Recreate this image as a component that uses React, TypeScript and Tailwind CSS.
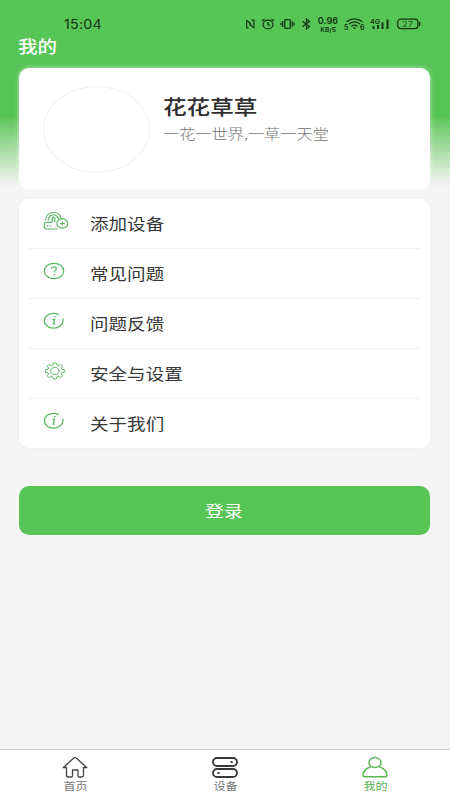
import type { ReactNode } from 'react';

const GREEN = '#57c456';

function RouterIcon() {
  return (
    <svg width="26" height="20" viewBox="0 0 26 20" fill="none" stroke="#5cb962" strokeWidth="1.2">
      <path d="M14.500 18H2.700a1.200 1.200 0 0 1-1.200-1.200v-4.300a1.200 1.200 0 0 1 1.200-1.200h6.500V7q1.300-1.600 2.600 0v4.300" />
      <path d="M2.700 9C3 4.500 6 1.500 10.300 1.500s7.200 2.600 7.700 6M5.300 9.300C5.600 6 7.400 4 10.300 4s4.600 1.600 5.100 4.300" />
      <path d="M4 14.800h1.300M7 14.800h1.300" strokeWidth="1.400" />
      <ellipse cx="19.300" cy="12.500" rx="5.500" ry="4.600" />
      <path d="M16.900 12.500h4.800M19.300 10.400v4.200" />
    </svg>
  );
}

function HelpIcon() {
  return (
    <svg width="22" height="18" viewBox="0 0 22 18" fill="none" stroke="#5cb962" strokeWidth="1.2">
      <ellipse cx="11" cy="9" rx="9.700" ry="7.700" />
      <path d="M8.500 7.100c0-1.400 1-2.300 2.500-2.300s2.400.9 2.400 2.100c0 1.700-2.300 1.700-2.300 3.700" strokeWidth="1.200" />
      <path d="M10.400 12.700h1.400" strokeWidth="1.300" />
    </svg>
  );
}

function InfoIcon() {
  return (
    <svg width="22" height="18" viewBox="0 0 22 18" fill="none" stroke="#5cb962" strokeWidth="1.3" strokeLinecap="round">
      <path d="M15.500 2.500C14 1.600 12.400 1.300 10.600 1.300 5.400 1.300 1.300 4.600 1.300 8.800s4.100 7.400 9.300 7.400 9.300-3.200 9.300-7.400V7" />
      <path d="M10 7.500h1.500l-1.100 4.700h1.300" strokeWidth="1.300" />
      <path d="M11.800 4.800h.2" strokeWidth="1.600" />
    </svg>
  );
}

function GearIcon() {
  return (
    <svg width="22" height="18" viewBox="0 0 22 18" fill="none" stroke="#5cb962" strokeWidth="1" strokeLinejoin="round">
      <path d="M10.400 1h3l.6 2.200 1.400.5 2.200-1.200 2.100 1.700-1.500 1.800.6 1.200 2.500.5v2.600l-2.500.5-.6 1.200 1.500 1.800-2.100 1.700-2.200-1.200-1.400.5-.6 2.200h-3l-.6-2.200-1.400-.5-2.200 1.200-2.100-1.700L5.600 12 5 10.800l-2.500-.5V7.700L5 7.200 5.600 6 4.100 4.200l2.100-1.700 2.200 1.200 1.400-.5z" />
      <ellipse cx="11.900" cy="9" rx="4.100" ry="3.500" />
    </svg>
  );
}

function StatusBar() {
  return (
    <div className="flex h-9 items-start pl-16 text-[#11380f]">
      <div className="mt-[15px] w-[181px] font-[Inter,sans-serif] text-[13px] leading-[18px]">
        <span className="inline-block origin-left scale-x-[1.1] tracking-[0.2px]">15:04</span>
      </div>
      <svg className="mt-[18px]" width="11" height="12" viewBox="0 0 11 12" fill="none" stroke="currentColor" strokeWidth="1.200">
        <path d="M3.800 10H1.700V2.500Q5.200 3.800 5.200 8M5.200 4.500Q5.700 8.500 8.900 9.700V2.200H6.800" />
      </svg>
      <svg className="ml-[5px] mt-[18px]" width="14" height="12" viewBox="0 0 14 12" fill="none" stroke="currentColor" strokeWidth="1.200">
        <ellipse cx="7" cy="6.500" rx="5" ry="4.400" />
        <path d="M7 4v3h2.300M1 3l2.500-2M13 3l-2.500-2" />
      </svg>
      <svg className="ml-[5px] mt-[18px]" width="15" height="12" viewBox="0 0 15 12" fill="none" stroke="currentColor" strokeWidth="1.200">
        <rect x="4.700" y="1.700" width="5.600" height="8.600" rx="1" />
        <path d="M2.700 3v6M12.300 3v6M1 4.500v3M14 4.500v3" />
      </svg>
      <svg className="ml-[6px] mt-[18px]" width="11" height="12" viewBox="0 0 11 12" fill="none" stroke="currentColor" strokeWidth="1.200">
        <path d="m1.500 3.200 7 5.300-3 2.500V1l3 2.500-7 5.300" />
      </svg>
      <div className="ml-[5px] mt-[15px] flex w-[22px] flex-col items-center font-[Inter,sans-serif] font-semibold">
        <span className="text-[9px] leading-[11px] tracking-[0.1px]">0.96</span>
        <span className="scale-x-[1.1] text-[6px] leading-[7px]">KB/S</span>
      </div>
      <svg className="ml-[5px] mt-[17px] font-[Inter,sans-serif] font-semibold" width="21" height="14" fill="none" stroke="currentColor" strokeWidth="1.300">
        <path d="M2.500 4.800c4.700-4 11.300-4 16 0M5 7c3.500-2.800 7.500-2.800 11 0M7.500 9.200c2-1.500 4-1.500 6 0" />
        <path d="M10.500 12.300 8.700 10.500h3.600z" fill="currentColor" stroke="none" />
        <g fill="currentColor" stroke="none" fontSize="7">
          <text x="0" y="13">5</text>
          <text x="16" y="13">6</text>
        </g>
      </svg>
      <svg className="ml-[5px] mt-[17px] font-[Inter,sans-serif] font-semibold" width="21" height="14" fill="currentColor">
        <text x="0" y="6.700" fontSize="6.500" textLength="10" lengthAdjust="spacingAndGlyphs">4G</text>
        <path d="M2.500 9h2v3h-2zM7 8h2v4H7zM11.500 5.500h2V12h-2zM16.500 2.500h2V12h-2z" />
      </svg>
      <svg className="ml-[5px] mt-[17px] font-[Inter,sans-serif]" width="25" height="14" fill="none" stroke="currentColor" strokeWidth="1.200">
        <rect x="1.700" y="2.200" width="20.300" height="9.400" rx="3" />
        <path d="M23.500 5v4" strokeWidth="1.500" />
        <text x="6" y="9.700" fontSize="7.500" fill="currentColor" stroke="none" opacity="0.750" textLength="11" lengthAdjust="spacingAndGlyphs">27</text>
      </svg>
    </div>
  );
}

const menu: { label: string; icon: ReactNode }[] = [
  { label: '添加设备', icon: <RouterIcon /> },
  { label: '常见问题', icon: <HelpIcon /> },
  { label: '问题反馈', icon: <InfoIcon /> },
  { label: '安全与设置', icon: <GearIcon /> },
  { label: '关于我们', icon: <InfoIcon /> },
];

function NavItem({ label, active, children }: { label: string; active?: boolean; children: ReactNode }) {
  return (
    <div className={`flex flex-1 flex-col items-center pt-[6px] ${active ? 'text-[#53b34f]' : 'text-[#777]'}`}>
      {children}
      <span className="inline-block scale-x-[1.150] text-[10.500px] leading-[14px]">{label}</span>
    </div>
  );
}

export default function App() {
  return (
    <div className="flex h-[800px] w-[450px] flex-col overflow-hidden bg-[#f5f5f5] font-['Noto_Sans_CJK_SC',sans-serif]">
      <header className="h-[187px] shrink-0 bg-linear-to-b from-[#57c456] from-[62%] to-[#f5f5f5]">
        <StatusBar />
        <h1 className="h-8 pl-[18px] text-[16.500px] font-medium leading-[21px] text-white">
          <span className="inline-block origin-left scale-x-[1.180]">我的</span>
        </h1>
        <section className="ml-[19px] mr-5 flex h-[121px] rounded-[10px] bg-white pl-6 pt-[18px] shadow-[0_0_5px_rgba(255,255,255,0.600)]">
          <div className="h-[87px] w-[107px] rounded-[50%] border-[1.500px] border-[#f1f1f1]" />
          <div className="ml-[13px] pt-[8px]">
            <h2 className="w-fit origin-left scale-x-[1.180] text-[20px] font-medium leading-[26px] text-[#2e2e2e]">花花草草</h2>
            <p className="mt-px w-fit origin-left scale-x-[1.190] whitespace-nowrap text-[13.600px] font-light leading-[24px] text-[#757575]">一花一世界,一草一天堂</p>
          </div>
        </section>
      </header>

      <main className="flex-1 pl-[19px] pr-5 pt-3">
        <ul className="h-[249px] rounded-[10px] bg-white px-[10px] shadow-[0_0_4px_rgba(0,0,0,0.030)]">
          {menu.map((item) => (
            <li key={item.label} className="flex h-[50px] items-center border-b border-[#f1f1f1] last:border-transparent">
              <div className="flex w-[61px] pb-[5px] pl-[14px]">{item.icon}</div>
              <span className="mb-[2px] inline-block origin-left scale-x-[1.160] text-[16px] leading-6 text-[#383838]">{item.label}</span>
            </li>
          ))}
        </ul>
        <button className="mt-[38px] flex h-[49px] w-full items-center justify-center rounded-[10px] pb-[2px] text-[16px] text-white" style={{ backgroundColor: GREEN }}>
          <span className="inline-block scale-x-[1.180]">登录</span>
        </button>
      </main>

      <nav className="flex h-[51px] border-t border-[#d0d0d0] bg-white">
        <NavItem label="首页">
          <svg width="26" height="23" viewBox="0 0 26 23" fill="none" stroke="#444" strokeWidth="1.300" strokeLinejoin="round">
            <path d="M1.300 11.500 11.500 2.300q1.500-1.200 3 0L24.700 11.500H21.500v7.800q0 1.700-1.700 1.700h-2.600q-1.200 0-1.200-1.200V14h-5.500v5.800q0 1.200-1.200 1.200H6.200q-1.700 0-1.700-1.700v-7.800z" />
          </svg>
        </NavItem>
        <NavItem label="设备">
          <svg width="26" height="23" viewBox="0 0 26 23" fill="none" stroke="#383838" strokeWidth="1.800" strokeLinecap="round">
            <rect x="1" y="2" width="24" height="8" rx="4" />
            <rect x="1" y="13" width="24" height="8" rx="4" />
            <path d="M19.300 6h.6M6.200 17h.6" />
          </svg>
        </NavItem>
        <NavItem label="我的" active>
          <svg width="26" height="23" viewBox="0 0 26 23" fill="none" stroke="#5bb957" strokeWidth="1.500" strokeLinejoin="round">
            <ellipse cx="13" cy="6.500" rx="6" ry="4.900" />
            <path d="M9 10.700C4.500 12 1.500 14.700 1 18.800q-.2 2 1.800 2h20.400q2 0 1.800-2c-.5-4.100-3.500-6.800-8-8.100" />
          </svg>
        </NavItem>
      </nav>
    </div>
  );
}
